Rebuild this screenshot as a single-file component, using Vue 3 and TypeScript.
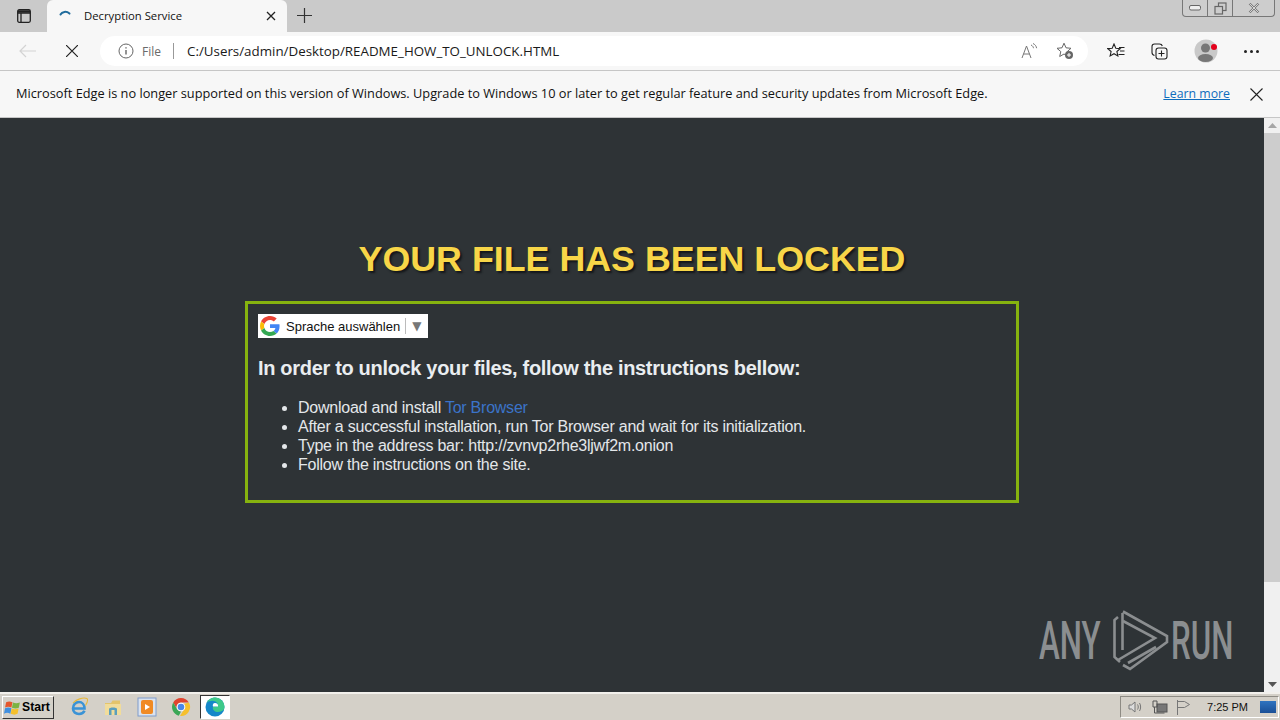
<script setup lang="ts">
const steps = [
  "After a successful installation, run Tor Browser and wait for its initialization.",
  "Type in the address bar: http://zvnvp2rhe3ljwf2m.onion",
  "Follow the instructions on the site.",
];
</script>

<template>
  <div class="window">
    <header class="tabstrip">
      <button class="tab-actions">
        <svg width="16" height="16" viewBox="0 0 16 16" fill="none" stroke="#222" stroke-width="1.3">
          <rect x="1.7" y="1.7" width="12.6" height="12.6" rx="1.5" />
          <path d="M1.7 5h12.6M5 5v9.3" />
          <path d="M2 3.4h12" stroke-width="2.4" />
        </svg>
      </button>
      <div class="tab">
        <svg class="spinner" width="16" height="16" viewBox="0 0 16 16" fill="none">
          <path d="M2.5 6.5C4 3.6 8.4 2.8 11.5 5.6" stroke="#1f6b9c" stroke-width="2" stroke-linecap="round" />
        </svg>
        <span class="tab-title">Decryption Service</span>
        <svg class="tab-close" width="10" height="10" viewBox="0 0 10 10" stroke="#222" stroke-width="1.3">
          <path d="M1 1l8 8M9 1l-8 8" />
        </svg>
      </div>
      <svg class="new-tab" width="15" height="15" viewBox="0 0 15 15" stroke="#333" stroke-width="1.2">
        <path d="M7.5 0v15M0 7.5h15" />
      </svg>
      <div class="caption">
        <span class="cap-btn">
          <svg width="12" height="6" viewBox="0 0 12 6" fill="#eee" stroke="#666"><rect x="0.5" y="0.5" width="11" height="4.5" rx="1.5" /></svg>
        </span>
        <span class="cap-btn">
          <svg width="13" height="13" viewBox="0 0 13 13" fill="none" stroke="#666" stroke-width="1.2">
            <rect x="4.5" y="1" width="7.5" height="7.5" />
            <rect x="1" y="4.5" width="7.5" height="7.5" fill="#ccc" />
          </svg>
        </span>
        <span class="cap-btn wide">
          <svg width="12" height="10" viewBox="0 0 12 10" stroke="#777" stroke-width="2.2">
            <path d="M1.5 0.5l9 9M10.5 0.5l-9 9" />
            <path d="M1.5 0.5l9 9M10.5 0.5l-9 9" stroke="#eee" stroke-width="0.8" />
          </svg>
        </span>
      </div>
    </header>

    <nav class="toolbar">
      <svg class="nav-back" width="18" height="14" viewBox="0 0 18 14" fill="none" stroke="#d3d3d3" stroke-width="1.2">
        <path d="M17 7H1M7 1L1 7l6 6" />
      </svg>
      <svg class="nav-stop" width="12" height="12" viewBox="0 0 12 12" stroke="#222" stroke-width="1.2">
        <path d="M0 0l12 12M12 0L0 12" />
      </svg>
      <div class="address">
        <svg width="16" height="16" viewBox="0 0 16 16" fill="none" stroke="#666" stroke-width="1">
          <circle cx="8" cy="8" r="7" />
          <path d="M8 7v4.5M8 4.2v1.4" stroke-width="1.4" />
        </svg>
        <span class="scheme">File</span>
        <span class="divider"></span>
        <span class="url">C:/Users/admin/Desktop/README_HOW_TO_UNLOCK.HTML</span>
        <svg class="read-aloud" width="17" height="16" viewBox="0 0 17 16" fill="none" stroke="#777" stroke-width="1">
          <path d="M1 15L5.5 3 10 15M2.6 11h5.8" />
          <path d="M10 2c1.5.6 2.3 1.8 2.5 3.2M12 .5c2 .9 3.3 2.6 3.6 4.7" />
        </svg>
        <svg class="fav-add" width="18" height="18" viewBox="0 0 18 18" fill="none" stroke="#666" stroke-width="1">
          <path d="M8 1.2l2 4.6 5 .5-3.8 3.3 1.1 4.9L8 12l-4.3 2.5 1.1-4.9L1 6.3l5-.5z" />
          <circle cx="13" cy="13" r="4" fill="#666" stroke="none" />
          <path d="M13 11v4M11 13h4" stroke="#fff" />
        </svg>
      </div>
      <div class="tools">
        <svg width="18" height="16" viewBox="0 0 18 16" fill="none" stroke="#222" stroke-width="1.1">
          <path d="M7 1l1.8 4.2 4.4.4-3.3 2.9 1 4.4L7 10.7l-3.9 2.2 1-4.4L.8 5.6l4.4-.4z" />
          <path d="M12 4.5h5.5M13 8h4.5M11.5 11.500h6" />
        </svg>
        <svg width="17" height="17" viewBox="0 0 17 17" fill="none" stroke="#222" stroke-width="1.1">
          <path d="M3.5 12.5C1.8 12 1 11 1 9.5V3.5C1 2 2 1 3.5 1h5c1.5 0 2.5.8 2.8 2" />
          <rect x="5" y="5" width="11" height="11" rx="2.5" />
          <path d="M10.5 7.5v6M7.500 10.5h6" />
        </svg>
        <div class="avatar">
          <svg width="24" height="24" viewBox="0 0 24 24">
            <circle cx="12" cy="12" r="11.5" fill="#c9c9c9" />
            <circle cx="11.5" cy="9" r="4.5" fill="#777" />
            <ellipse cx="11.5" cy="19" rx="7.5" ry="4" fill="#777" />
            <circle cx="20" cy="8" r="3" fill="#e3001b" />
          </svg>
        </div>
        <div class="more"><i></i><i></i><i></i></div>
      </div>
    </nav>

    <div class="infobar">
      <span class="info-text">Microsoft Edge is no longer supported on this version of Windows. Upgrade to Windows 10 or later to get regular feature and security updates from Microsoft Edge.</span>
      <a class="learn">Learn more</a>
      <svg width="13" height="13" viewBox="0 0 13 13" stroke="#222" stroke-width="1.1">
        <path d="M.5.5l12 12M12.5.5l-12 12" />
      </svg>
    </div>

    <div class="viewport">
      <main class="page">
        <h1>YOUR FILE HAS BEEN LOCKED</h1>
        <section class="box">
          <div class="translate">
            <svg width="20" height="20" viewBox="0 0 48 48">
              <path fill="#EA4335" d="M24 9.5c3.5 0 6.700 1.200 9.200 3.600l6.900-6.900C35.900 2.400 30.500 0 24 0 14.600 0 6.500 5.400 2.600 13.200l8 6.200C12.500 13.700 17.800 9.500 24 9.500z" />
              <path fill="#4285F4" d="M47 24.500c0-1.600-.1-3.100-.4-4.500H24v9h12.900c-.6 3-2.200 5.500-4.800 7.200l7.700 6C44.300 37.900 47 31.800 47 24.500z" />
              <path fill="#FBBC05" d="M10.500 28.600c-.5-1.400-.8-3-.8-4.600s.3-3.200.8-4.600l-8-6.200C.9 16.500 0 20.100 0 24s.9 7.500 2.600 10.800l7.900-6.200z" />
              <path fill="#34A853" d="M24 48c6.500 0 11.900-2.100 15.800-5.800l-7.700-6c-2.100 1.400-4.900 2.300-8.100 2.300-6.200 0-11.500-4.200-13.400-9.900l-8 6.200C6.500 42.600 14.600 48 24 48z" />
            </svg>
            <span class="translate-label">Sprache auswählen</span>
            <span class="translate-sep"></span>
            <span class="translate-arrow">▼</span>
          </div>
          <h2>In order to unlock your files, follow the instructions bellow:</h2>
          <ul>
            <li>Download and install <a>Tor Browser</a></li>
            <li v-for="step in steps" :key="step">{{ step }}</li>
          </ul>
        </section>
      </main>
      <div class="scrollbar">
        <span class="scroll-btn">
          <svg width="9" height="5" viewBox="0 0 9 5"><path d="M4.5 0L9 5H0z" fill="#a6a6a6" /></svg>
        </span>
        <div class="scroll-track"><div class="scroll-thumb"></div></div>
        <span class="scroll-btn">
          <svg width="9" height="5" viewBox="0 0 9 5"><path d="M0 0h9L4.500 5z" fill="#555" /></svg>
        </span>
      </div>
      <div class="watermark">
        <span>ANY</span>
        <svg width="56" height="62" viewBox="0 0 56 62" fill="none" stroke="#8b8e90" stroke-width="2.6">
          <path d="M5 7L1.500 10v37L7 52" />
          <path d="M9.500 3v37" />
          <path d="M10 1.500L54 26v6L17 59l-7-4" />
          <path d="M10 11l32 17L5 50" />
          <path d="M43 37L15 53" />
        </svg>
        <span>RUN</span>
      </div>
    </div>

    <footer class="taskbar">
      <button class="start">
        <svg width="18" height="17" viewBox="0 0 17 16">
          <path d="M2 3c2-1 4-1 6 0l-1 5C5 7 3 7 1 8z" fill="#e4572e" />
          <path d="M8.500 3.200c2 1 4 1 6.500 0l-1 5c-2 1-4 1-6.500 0z" fill="#7cb342" />
          <path d="M1 8.800c2-1 4-1 6 0l-1 5c-2-1-4-1-6 0z" fill="#3f8fe0" />
          <path d="M7.300 9c2 1 4 1 6.500 0l-1 5c-2 1-4 1-6.500 0z" fill="#f5c02c" />
        </svg>
        <span>Start</span>
      </button>
      <div class="apps">
        <span class="app">
          <svg width="20" height="20" viewBox="0 0 20 20" fill="none">
            <path d="M3 11.500h12.500C15.500 7.500 13 5 10 5c-3.500 0-6 3-6 6.500S6.500 17 10 17c2.500 0 4.500-1 5.500-3.200" stroke="#3a93d6" stroke-width="2.600" />
            <path d="M4 6C7 2.500 14 0 18 1.500c1.500 2-.2 5-1.500 7" stroke="#e8b93a" stroke-width="1.100" />
          </svg>
        </span>
        <span class="app">
          <svg width="20" height="20" viewBox="0 0 20 20">
            <path d="M2 6h6l1.500-2.500H17V8H2z" fill="#e3c46b" />
            <path d="M2 7h16v11H2z" fill="#f1dc9a" />
            <path d="M6 18v-6c0-2 8-2 8 0v6h-2.500v-5h-3v5z" fill="#5b9fbd" />
          </svg>
        </span>
        <span class="app media">
          <svg width="20" height="20" viewBox="0 0 20 20">
            <rect x="1" y="1" width="18" height="18" fill="#dbe3ee" stroke="#7f9ccb" />
            <rect x="4" y="3" width="12" height="14" rx="2" fill="#f08a24" />
            <path d="M8 7l5 3-5 3z" fill="#fff" />
          </svg>
        </span>
        <span class="app">
          <svg width="20" height="20" viewBox="0 0 20 20">
            <path d="M10 1a9 9 0 0 1 7.800 4.500H10z" fill="#e0442f" />
            <path d="M2.200 5.500A9 9 0 0 1 10 1v4.500a4.500 4.500 0 0 0-3.900 6.700L6 12z" fill="#e0442f" />
            <path d="M2.200 5.500L6.100 12.200A4.500 4.500 0 0 0 10 14.500L7.800 18.700A9 9 0 0 1 2.200 5.500z" fill="#3aa757" />
            <path d="M17.800 5.500A9 9 0 0 1 9 19l4-6.500a4.500 4.500 0 0 0-.5-5.500z" fill="#f6c02d" />
            <circle cx="10" cy="10" r="4.300" fill="#fff" />
            <circle cx="10" cy="10" r="3.300" fill="#4a87e8" />
          </svg>
        </span>
        <span class="app active">
          <svg width="20" height="20" viewBox="0 0 20 20">
            <circle cx="10" cy="10" r="9.500" fill="#1487c9" />
            <path d="M19.500 10c0-5-4-9.500-9.500-9.500C6 .5 2.800 3 1.500 6c2-2 6-3 9-1.500 2 1 3 3 2 5H8C7 13 10 15 13 15c2 0 4-.7 5.500-2 .6-1 1-2 1-3z" fill="#3ec98a" />
            <path d="M8 9.500h5c.5-2-1-3.500-3-3.500S7.300 8 8 9.500z" fill="#fff" />
          </svg>
        </span>
      </div>
      <div class="tray">
        <svg width="16" height="14" viewBox="0 0 16 14" fill="none" stroke="#777" stroke-width="1">
          <path d="M1 5h2.500L7 2v10L3.500 9H1z" fill="#ddd" />
          <path d="M9.500 4.500c1 1.500 1 3.500 0 5M11.500 3c1.500 2.500 1.500 5.500 0 8" />
        </svg>
        <svg width="16" height="15" viewBox="0 0 16 15" fill="none" stroke="#555" stroke-width="1">
          <rect x="5" y="4" width="10" height="8" fill="#777" />
          <path d="M1 1h4v6H1zM2.500 7v6h10" />
        </svg>
        <svg width="15" height="15" viewBox="0 0 15 15" fill="none" stroke="#777" stroke-width="1">
          <path d="M1.500 0v15M1.500 1.500h7l5 3-5 3h-7" />
        </svg>
        <span class="clock">7:25 PM</span>
        <span class="show-desktop"></span>
      </div>
    </footer>
  </div>
</template>

<style>
html,
body {
  margin: 0;
  height: 100%;
  overflow: hidden;
}
</style>

<style scoped>
.window {
  width: 1280px;
  height: 720px;
  display: flex;
  flex-direction: column;
  overflow: hidden;
  font-family: "Open Sans", "Noto Sans", sans-serif;
  color: #111;
}

.tabstrip {
  height: 32px;
  flex: none;
  display: flex;
  align-items: flex-end;
  background: #cacaca;
  position: relative;
}

.tab-actions {
  width: 47px;
  height: 32px;
  flex: none;
  border: none;
  background: none;
  padding: 0;
  display: flex;
  align-items: center;
  justify-content: center;
}

.tab {
  width: 240px;
  height: 32px;
  box-sizing: border-box;
  flex: none;
  display: flex;
  align-items: center;
  padding: 0 11px;
  background: #f7f7f7;
  border-radius: 6px 6px 0 0;
}

.tab-title {
  margin-left: 10px;
  margin-bottom: 2px;
  font-size: 11.3px;
  flex: 1;
}

.new-tab {
  margin: 0 0 9px 10px;
}

.caption {
  position: absolute;
  top: 0;
  right: 5px;
  height: 16px;
  display: flex;
  border: 1px solid #777;
  border-top: none;
  border-radius: 0 0 4px 4px;
  background: #cdcdcd;
}

.cap-btn {
  width: 24px;
  display: flex;
  align-items: center;
  justify-content: center;
  border-right: 1px solid #777;
}

.cap-btn.wide {
  width: 41px;
  border-right: none;
}

.toolbar {
  height: 38px;
  flex: none;
  display: flex;
  align-items: center;
  background: #f7f7f7;
  border-bottom: 1px solid #c6c6c6;
}

.nav-back {
  margin-left: 19px;
}

.nav-stop {
  margin-left: 29px;
}

.address {
  width: 988px;
  height: 30px;
  box-sizing: border-box;
  margin-left: 22px;
  padding: 0 14px 0 18px;
  display: flex;
  align-items: center;
  background: #fff;
  border-radius: 15px;
}

.scheme {
  margin-left: 8px;
  font-size: 12px;
  color: #6a6a6a;
}

.divider {
  width: 1px;
  height: 16px;
  margin: 0 13px 0 12px;
  background: #999;
}

.url {
  flex: 1;
  font-size: 13.35px;
  color: #1a1a1a;
}

.fav-add {
  margin-left: 18px;
}

.tools {
  margin-left: 19px;
  flex: 1;
  display: flex;
  align-items: center;
  gap: 26px;
}

.avatar {
  height: 24px;
}

.more {
  display: flex;
  gap: 3px;
}

.more i {
  width: 3px;
  height: 3px;
  border-radius: 50%;
  background: #222;
}

.infobar {
  height: 47px;
  flex: none;
  box-sizing: border-box;
  display: flex;
  align-items: center;
  padding: 0 17px 0 16px;
  background: #f7f7f7;
  border-bottom: 1px solid #c6c6c6;
}

.info-text {
  flex: 1;
  margin-bottom: 2px;
  font-size: 12.78px;
  white-space: nowrap;
}

.learn {
  margin-right: 20px;
  margin-bottom: 2px;
  font-size: 12.3px;
  color: #0f6cbd;
  text-decoration: underline;
}

.viewport {
  flex: 1;
  min-height: 0;
  display: flex;
  position: relative;
  background: #2e3336;
}

.page {
  flex: 1;
  font-family: "Liberation Sans", Arial, sans-serif;
  padding: 119px 0 0;
  display: flex;
  flex-direction: column;
  align-items: center;
}

h1 {
  margin: 0 0 20px;
  height: 44px;
  line-height: 44px;
  font-size: 35.8px;
  font-weight: 700;
  color: #f8d648;
  text-shadow: 2px 2px 2px #14171a;
}

.box {
  width: 774px;
  height: 202px;
  box-sizing: border-box;
  padding: 10px 10px 0;
  border: 3px solid #86b30f;
}

.translate {
  width: 170px;
  height: 24px;
  box-sizing: border-box;
  padding: 0 5px 0 2px;
  display: flex;
  align-items: center;
  background: #fff;
  color: #111;
  font-family: "Liberation Sans", Arial, sans-serif;
}

.translate-label {
  margin-left: 6px;
  font-size: 13px;
  white-space: nowrap;
}

.translate-sep {
  width: 1px;
  height: 16px;
  margin-left: 5px;
  background: #bbb;
}

.translate-arrow {
  margin-left: 6px;
  font-size: 12px;
  color: #777;
  font-family: "DejaVu Sans", sans-serif;
}

h2 {
  margin: 18px 0 0;
  font-size: 20px;
  line-height: 24px;
  letter-spacing: -0.32px;
  font-weight: 700;
  color: #e9edf0;
  white-space: nowrap;
}

ul {
  margin: 18px 0 0;
  padding-left: 40px;
  list-style: disc;
  font-size: 16px;
  letter-spacing: -0.235px;
  line-height: 19px;
  color: #e4e7ea;
}

a {
  color: #3b73c9;
}

.scrollbar {
  width: 16px;
  flex: none;
  display: flex;
  flex-direction: column;
  background: #f0f0f0;
}

.scroll-btn {
  height: 15px;
  flex: none;
  display: flex;
  align-items: center;
  justify-content: center;
}

.scroll-track {
  flex: 1;
}

.scroll-thumb {
  height: 449px;
  background: #cdcdcd;
}

.watermark {
  position: absolute;
  left: 1039px;
  top: 492px;
  display: flex;
  align-items: center;
  gap: 6px;
  color: #8b8e90;
  font-family: "Roboto", "Liberation Sans", sans-serif;
  font-size: 53px;
  font-weight: 500;
  line-height: 62px;
}

.watermark span {
  display: inline-block;
  transform: scaleX(0.59);
  transform-origin: left center;
}

.watermark span:first-child {
  margin-right: -36px;
}

.watermark span:last-child {
  margin-left: -4px;
  margin-right: -38px;
}

.taskbar {
  height: 28px;
  flex: none;
  box-sizing: border-box;
  display: flex;
  align-items: center;
  background: #d4d0c8;
  border-top: 2px solid #f2f0ec;
  padding-left: 2px;
}

.start {
  width: 52px;
  height: 23px;
  box-sizing: border-box;
  padding: 0 0 0 1px;
  display: flex;
  align-items: center;
  gap: 0;
  background: #d4d0c8;
  border: 1px solid;
  border-color: #fff #333 #333 #fff;
  font-family: "Liberation Sans", Arial, sans-serif;
  font-size: 12.2px;
  font-weight: 700;
  color: #000;
}

.apps {
  margin-left: 15px;
  display: flex;
  align-items: center;
  gap: 14px;
}

.app {
  width: 20px;
  height: 20px;
}

.app.active {
  width: 30px;
  height: 24px;
  box-sizing: border-box;
  margin-left: -5px;
  display: flex;
  align-items: center;
  justify-content: center;
  background: #fff;
  border: 1px solid;
  border-color: #333 #fff #fff #333;
}

.tray {
  margin-left: auto;
  height: 22px;
  box-sizing: border-box;
  padding: 0 0 0 7px;
  display: flex;
  align-items: center;
  gap: 8px;
  border: 1px solid;
  border-color: #8e8b84 #fff #fff #8e8b84;
  margin-right: 1px;
}

.clock {
  margin-left: 8px;
  font-family: "Liberation Sans", Arial, sans-serif;
  font-size: 11px;
  color: #111;
}

.show-desktop {
  width: 16px;
  height: 12px;
  margin-left: 4px;
  margin-right: 2px;
  background: linear-gradient(#2f74c0, #1a4f96);
}
</style>
